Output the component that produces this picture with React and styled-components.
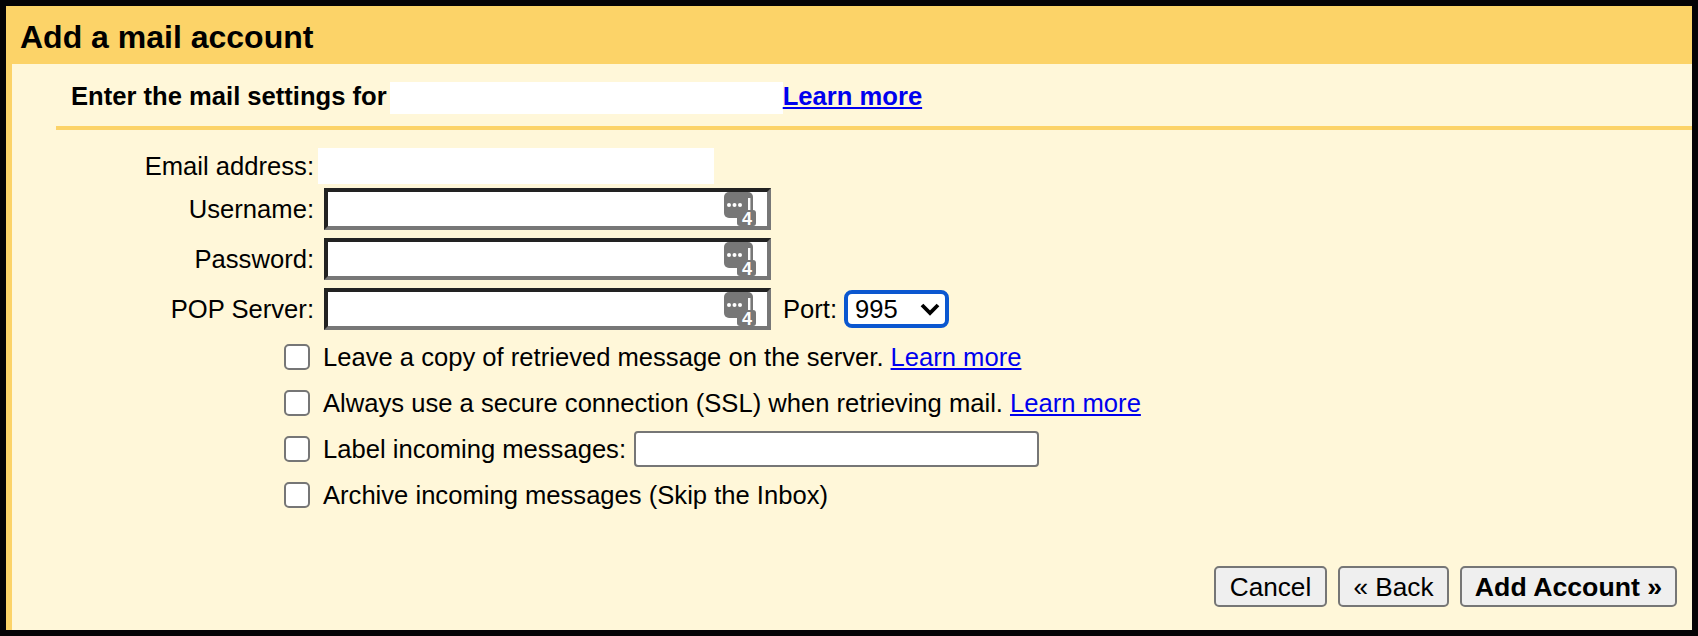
import styled, { createGlobalStyle } from "styled-components";

const GlobalStyle = createGlobalStyle`
  html, body {
    margin: 0;
    background: #000;
  }
  body {
    font-family: "Liberation Sans", Arial, sans-serif;
    font-size: 25.6px;
    color: #000;
  }
`;

const Frame = styled.div`
  box-sizing: border-box;
  width: 1698px;
  height: 636px;
  padding: 6px;
  background: #050305;
`;

const Dialog = styled.div`
  height: 100%;
  display: flex;
  flex-direction: column;
  background: #fcd368;
  padding-left: 6px;
`;

const Title = styled.h1`
  box-sizing: border-box;
  margin: 0 0 0 -6px;
  height: 58px;
  padding: 4px 0 0 14px;
  display: flex;
  align-items: center;
  font-size: 32px;
  font-weight: bold;
`;

const Panel = styled.div`
  flex: 1;
  display: flex;
  flex-direction: column;
  background: #fff7d9;
`;

const Heading = styled.div`
  box-sizing: border-box;
  margin-left: 44px;
  height: 66px;
  padding: 18px 0 0 15px;
  display: flex;
  align-items: flex-start;
  border-bottom: 4px solid #fcd368;
  font-weight: bold;
`;

const HeadingText = styled.span`
  line-height: 28px;
`;

const Masked = styled.div`
  background: #fff;
  width: ${(p) => p.$width}px;
  height: ${(p) => p.$height}px;
  margin-left: ${(p) => p.$left || 0}px;
`;

const A = styled.a`
  color: #0000ee;
  text-decoration: underline;
  line-height: ${(p) => p.$line || 32}px;
`;

const Fields = styled.div`
  margin-top: 18px;
  display: flex;
  flex-direction: column;
  gap: 8px;
`;

const FieldRow = styled.div`
  display: flex;
  align-items: center;
  height: ${(p) => p.$height}px;
  margin-bottom: ${(p) => p.$after || 0}px;
`;

const FieldLabel = styled.label`
  width: 302px;
  text-align: right;
  flex: none;
`;

const KeyBox = styled.div`
  box-sizing: border-box;
  position: relative;
  width: 447px;
  height: 42px;
  margin-left: 10px;
  background: #fff;
  border-style: solid;
  border-width: 4px;
  border-color: #222 #777 #777 #222;
`;

const KeyInput = styled.input`
  box-sizing: border-box;
  width: 100%;
  height: 100%;
  border: 0;
  outline: 0;
  padding: 0 50px 0 4px;
  background: transparent;
`;

const KeyIcon = styled.svg`
  position: absolute;
  right: 11px;
  top: 0;
  width: 32px;
  height: 40px;
  pointer-events: none;
`;

const PortLabel = styled.label`
  margin-left: 12px;
`;

const SelectWrap = styled.div`
  position: relative;
  margin-left: 7px;
  width: 105px;
  height: 38px;
`;

const Select = styled.select`
  appearance: none;
  box-sizing: border-box;
  width: 100%;
  height: 100%;
  padding: 0 0 0 7px;
  font: inherit;
  color: #000;
  background: #fff;
  border: 4px solid #0b57d0;
  border-radius: 8px;
  outline: 0;
`;

const Chevron = styled.svg`
  position: absolute;
  right: 9px;
  top: 12px;
  width: 20px;
  height: 14px;
  pointer-events: none;
`;

const Options = styled.div`
  margin-top: 4px;
  padding-left: 272px;
  display: flex;
  flex-direction: column;
`;

const OptionRow = styled.div`
  height: 46px;
  display: flex;
  align-items: center;
`;

const Checkbox = styled.input.attrs({ type: "checkbox" })`
  appearance: none;
  box-sizing: border-box;
  flex: none;
  margin: 0 13px 0 0;
  width: 26px;
  height: 26px;
  background: #fff;
  border: 2px solid #767676;
  border-radius: 5px;
`;

const OptionLink = styled(A)`
  margin-left: 7px;
`;

const LabelInput = styled.input`
  box-sizing: border-box;
  margin-left: 8px;
  width: 405px;
  height: 36px;
  background: #fff;
  border: 2px solid #767676;
  border-radius: 4px;
  outline: 0;
`;

const Footer = styled.div`
  margin-top: 48px;
  padding-right: 15px;
  display: flex;
  justify-content: flex-end;
  gap: 11px;
`;

const Button = styled.button`
  box-sizing: border-box;
  height: 41px;
  padding: 1px 0 0;
  width: ${(p) => p.$width}px;
  font-family: inherit;
  font-size: ${(p) => (p.$primary ? "26.7px" : "26.2px")};
  font-weight: ${(p) => (p.$primary ? "bold" : "normal")};
  color: #000;
  background: #efefef;
  border: 2px solid #767676;
  border-radius: 5px;
`;

const PasswordKey = () => (
  <KeyIcon viewBox="0 0 32 40" aria-hidden="true">
    <rect x="0" y="0" width="29" height="26" rx="5" fill="#777" />
    <rect x="13" y="18" width="19" height="16" rx="3" fill="#777" />
    <circle cx="5" cy="13" r="2" fill="#fff" />
    <circle cx="10.5" cy="13" r="2" fill="#fff" />
    <circle cx="16" cy="13" r="2" fill="#fff" />
    <rect x="24" y="6" width="2.4" height="12" fill="#fff" />
    <text
      x="23"
      y="33"
      textAnchor="middle"
      fontFamily="Liberation Sans, Arial, sans-serif"
      fontWeight="bold"
      fontSize="18"
      fill="#fff"
    >
      4
    </text>
  </KeyIcon>
);

const PasswordField = ({ label, after }) => (
  <FieldRow $height={42}>
    <FieldLabel>{label}</FieldLabel>
    <KeyBox>
      <KeyInput type="text" />
      <PasswordKey />
    </KeyBox>
    {after}
  </FieldRow>
);

const App = () => {
  return (
    <>
      <GlobalStyle />
      <Frame>
        <Dialog>
          <Title>Add a mail account</Title>
          <Panel>
            <Heading>
              <HeadingText>Enter the mail settings for</HeadingText>
              <Masked $width={393} $height={32} $left={3} />
              <A href="#" $line={28}>Learn more</A>
            </Heading>
            <Fields>
              <FieldRow $height={36} $after={-4}>
                <FieldLabel>Email address:</FieldLabel>
                <Masked $width={396} $height={36} $left={4} />
              </FieldRow>
              <PasswordField label="Username:" />
              <PasswordField label="Password:" />
              <PasswordField
                label="POP Server:"
                after={
                  <>
                    <PortLabel>Port:</PortLabel>
                    <SelectWrap>
                      <Select defaultValue="995">
                        <option>995</option>
                        <option>110</option>
                      </Select>
                      <Chevron viewBox="0 0 20 14" aria-hidden="true">
                        <path d="M2 3 L10 11 L18 3" fill="none" stroke="#000" strokeWidth="3.8" />
                      </Chevron>
                    </SelectWrap>
                  </>
                }
              />
            </Fields>
            <Options>
              <OptionRow>
                <Checkbox />
                Leave a copy of retrieved message on the server.
                <OptionLink href="#">Learn more</OptionLink>
              </OptionRow>
              <OptionRow>
                <Checkbox />
                Always use a secure connection (SSL) when retrieving mail.
                <OptionLink href="#">Learn more</OptionLink>
              </OptionRow>
              <OptionRow>
                <Checkbox />
                Label incoming messages:
                <LabelInput type="text" />
              </OptionRow>
              <OptionRow>
                <Checkbox />
                Archive incoming messages (Skip the Inbox)
              </OptionRow>
            </Options>
            <Footer>
              <Button $width={113}>Cancel</Button>
              <Button $width={111}>« Back</Button>
              <Button $width={217} $primary>
                Add Account »
              </Button>
            </Footer>
          </Panel>
        </Dialog>
      </Frame>
    </>
  );
};

export default App;
